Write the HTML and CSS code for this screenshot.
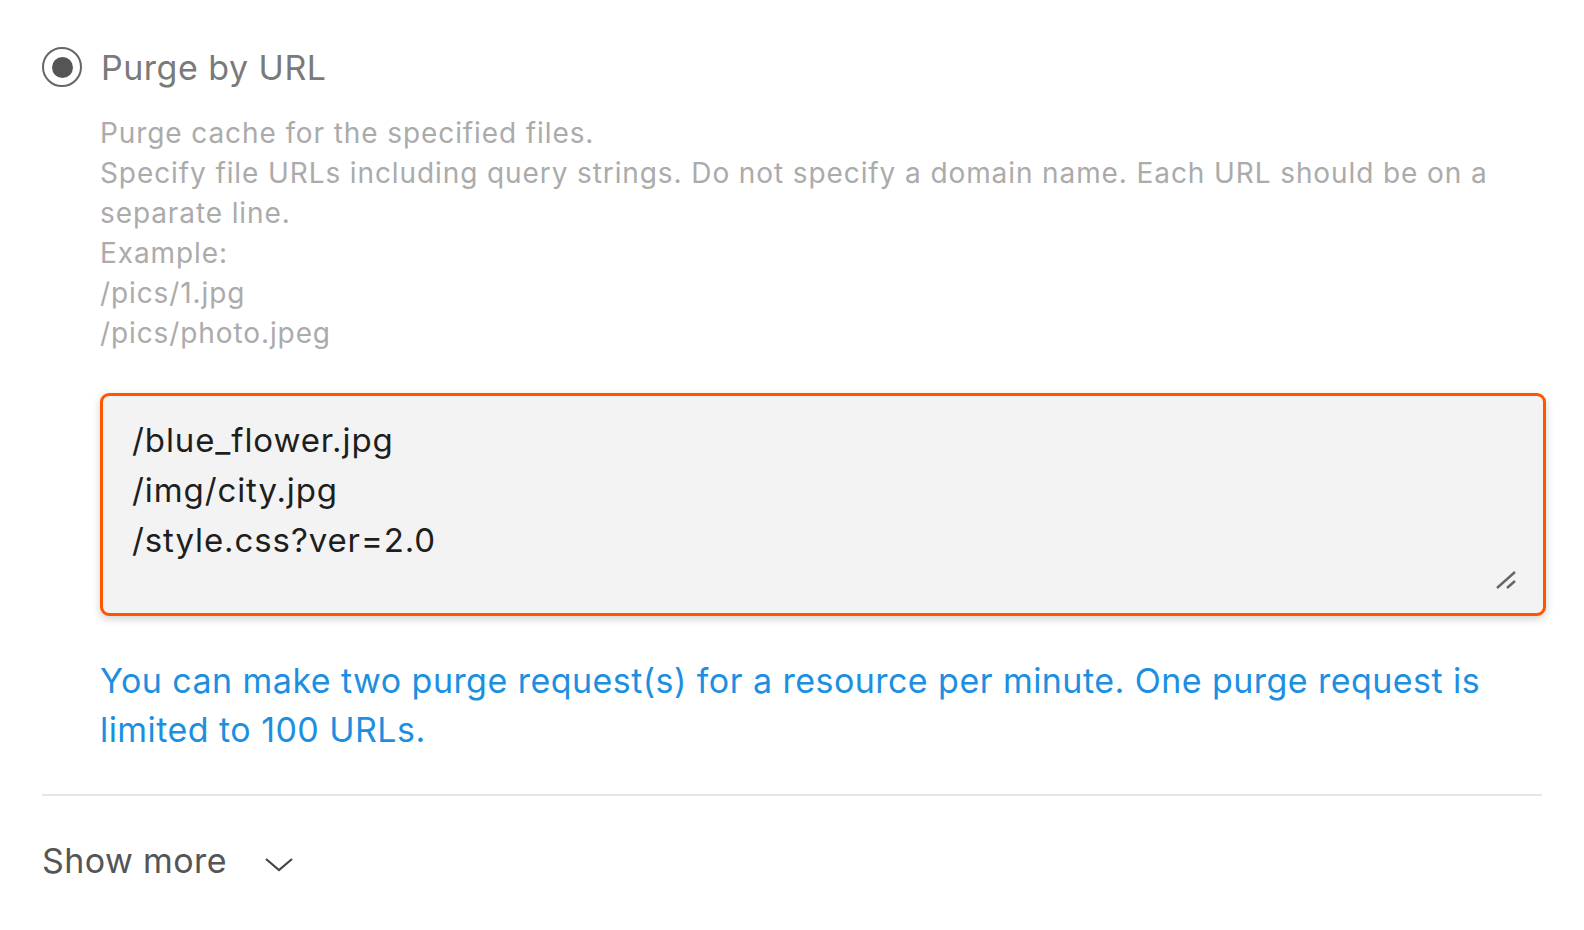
FILE: index.html
```html
<!DOCTYPE html>
<html>
<head>
<meta charset="utf-8">
<link rel="stylesheet" href="styles.css">
</head>
<body>
<div class="page">
  <div class="option">
    <div class="option-head">
      <span class="radio"><span class="radio-dot"></span></span>
      <span class="option-title">Purge by URL</span>
    </div>
    <div class="option-body">
      <div class="desc">
        <div>Purge cache for the specified files.</div>
        <div>Specify file URLs including query strings. Do not specify a domain name. Each URL should be on a separate line.</div>
        <div>Example:</div>
        <div>/pics/1.jpg</div>
        <div>/pics/photo.jpeg</div>
      </div>
      <div class="field">
        <div class="field-text">/blue_flower.jpg<br>/img/city.jpg<br>/style.css?ver=2.0</div>
        <svg class="grip" width="20" height="18" viewBox="0 0 20 18"><path d="M1 17 L19 1 M11 17 L19 10" stroke="#666" stroke-width="2.4" fill="none"/></svg>
      </div>
      <p class="note">You can make two purge request(s) for a resource per minute. One purge request is limited to 100 URLs.</p>
    </div>
  </div>
  <div class="divider"></div>
  <div class="more">
    <span>Show more</span>
    <svg class="chev" width="28" height="15" viewBox="0 0 28 15"><path d="M1 2 L14 13 L27 2" stroke="#444" stroke-width="2.2" fill="none"/></svg>
  </div>
</div>
</body>
</html>
```

FILE: styles.css
```css
* { box-sizing: border-box; }
html, body { margin: 0; background: #fff; }
body { font-family: Inter, "Noto Sans", sans-serif; }
.page { padding: 46px 42px 0 42px; }
.option-head { display: flex; align-items: center; gap: 19px; height: 42px; }
.radio {
  width: 40px; height: 40px; border: 2.2px solid #666; border-radius: 50%;
  display: flex; align-items: center; justify-content: center; flex: none;
}
.radio-dot { width: 21px; height: 21px; border-radius: 50%; background: #555; }
.option-title { font-size: 34px; color: #7a7a7a; letter-spacing: 0.5px; }
.option-body { padding-left: 58px; margin-right: -4px; }
.desc { margin-top: 25px; font-size: 28px; line-height: 40px; color: #ababab; letter-spacing: 0.9px; }
.field {
  position: relative; margin-top: 40px; height: 223px;
  background: #f3f3f3; border: 3px solid #ff5500; border-radius: 9px;
  padding: 19px 29px; box-shadow: 0 3px 8px rgba(0,0,0,0.18);
}
.field-text { font-size: 33px; line-height: 50px; color: #1e1e1e; letter-spacing: 0.9px; }
.grip { position: absolute; right: 27px; bottom: 24px; }
.note { margin: 40px 0 0; font-size: 34px; line-height: 49px; color: #1d8fe0; letter-spacing: 0.45px; }
.divider { margin-top: 40px; height: 2px; background: #e6e6e6; }
.more { display: flex; align-items: center; gap: 38px; margin-top: 44px; font-size: 34px; color: #555; letter-spacing: 0.4px; }
.chev { margin-top: 8px; }
```
